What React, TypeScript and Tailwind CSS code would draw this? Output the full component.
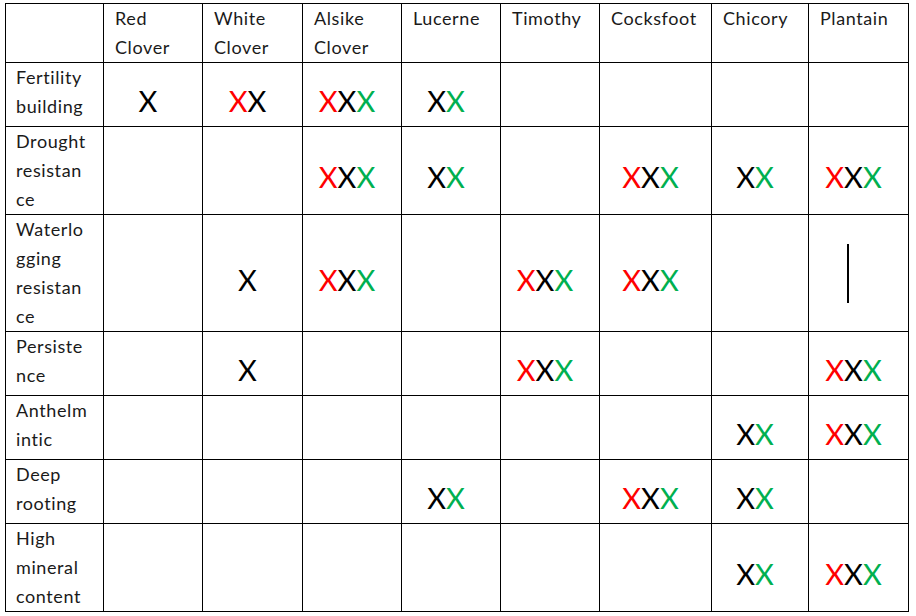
const columns = [
  ["Red", "Clover"],
  ["White", "Clover"],
  ["Alsike", "Clover"],
  ["Lucerne"],
  ["Timothy"],
  ["Cocksfoot"],
  ["Chicory"],
  ["Plantain"],
];

const widths = [
  "w-[98px]",
  "w-[99px]",
  "w-[100px]",
  "w-[99px]",
  "w-[99px]",
  "w-[99px]",
  "w-[112px]",
  "w-[97px]",
  "w-[100px]",
];

// k = black, r = red, g = green, | = the stray bar in the plantain cell
const rows: { label: string[]; height: string; marks: string[] }[] = [
  {
    label: ["Fertility", "building"],
    height: "h-[64px]",
    marks: ["k", "rk", "rkg", "kg", "", "", "", ""],
  },
  {
    label: ["Drought", "resistan", "ce"],
    height: "h-[88px]",
    marks: ["", "", "rkg", "kg", "", "rkg", "kg", "rkg"],
  },
  {
    label: ["Waterlo", "gging", "resistan", "ce"],
    height: "h-[117px]",
    marks: ["", "k", "rkg", "", "rkg", "rkg", "", "|"],
  },
  {
    label: ["Persiste", "nce"],
    height: "h-[64px]",
    marks: ["", "k", "", "", "rkg", "", "", "rkg"],
  },
  {
    label: ["Anthelm", "intic"],
    height: "h-[64px]",
    marks: ["", "", "", "", "", "", "kg", "rkg"],
  },
  {
    label: ["Deep", "rooting"],
    height: "h-[64px]",
    marks: ["", "", "", "kg", "", "rkg", "kg", ""],
  },
  {
    label: ["High", "mineral", "content"],
    height: "h-[87px]",
    marks: ["", "", "", "", "", "", "kg", "rkg"],
  },
];

const colour: Record<string, string> = {
  k: "text-black",
  r: "text-[#ff0000]",
  g: "text-[#00b050]",
};

function Marks({ code }: { code: string }) {
  if (code === "|") {
    return (
      <div className="flex items-center justify-center pr-[22px]">
        <div className="h-[59px] w-[2px] bg-black" />
      </div>
    );
  }

  return (
    <div className="flex items-center justify-center pr-[10px] pt-[12px] text-[29px] leading-none">
      {code.split("").map((c, i) => (
        <span key={i} className={colour[c]}>
          X
        </span>
      ))}
    </div>
  );
}

export default function App() {
  return (
    <div className="min-h-[616px] w-[916px] bg-white pl-[5px] pt-[3px] font-['Lato',sans-serif] text-[#1a1a1a]">
      <table className="w-[903px] table-fixed border-collapse">
        <colgroup>
          {widths.map((w, i) => (
            <col key={i} className={w} />
          ))}
        </colgroup>
        <thead>
          <tr className="h-[59px]">
            <th className="border border-black" />
            {columns.map((lines, i) => (
              <th
                key={i}
                className="border border-black pl-[11px] text-left align-top text-[18px] font-normal leading-[29px] tracking-[0.6px]"
              >
                {lines.map((l, j) => (
                  <div key={j}>{l}</div>
                ))}
              </th>
            ))}
          </tr>
        </thead>
        <tbody>
          {rows.map((row, i) => (
            <tr key={i} className={row.height}>
              <td className="border border-black pl-[10px] align-top text-[18px] leading-[29px] tracking-[0.6px]">
                {row.label.map((l, j) => (
                  <div key={j}>{l}</div>
                ))}
              </td>
              {row.marks.map((m, j) => (
                <td key={j} className="border border-black align-middle">
                  {m && <Marks code={m} />}
                </td>
              ))}
            </tr>
          ))}
        </tbody>
      </table>
    </div>
  );
}
